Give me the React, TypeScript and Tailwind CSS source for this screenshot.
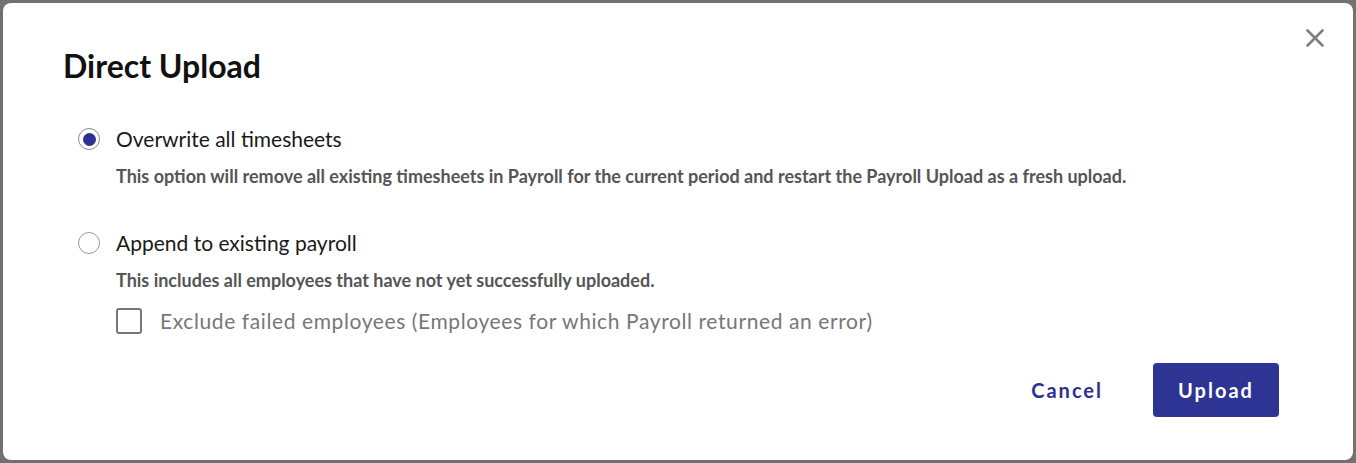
import React from "react";

export default function App() {
  return (
    <div className="w-[1356px] h-[463px] bg-[#717171] p-[3px] overflow-hidden" style={{ fontFamily: "Lato, 'Noto Sans', sans-serif" }}>
      <div className="relative w-full h-full bg-white rounded-[8px] pl-[60px] pr-[74px] pt-[45px]">
        <button className="absolute right-[26px] top-[23px] w-[24px] h-[24px] flex items-center justify-center" aria-label="Close">
          <svg width="18" height="18" viewBox="0 0 18 18">
            <path d="M1.5 1.5 L16.5 16.5 M16.5 1.5 L1.5 16.5" stroke="#7f7f7f" strokeWidth="2.6" strokeLinecap="round" />
          </svg>
        </button>
        <h1 className="text-[32px] leading-[36px] font-bold text-[#111]">Direct Upload</h1>

        <div className="mt-[41px] ml-[15px]">
          <div className="flex items-center h-[28px]">
            <span className="w-[22px] h-[22px] rounded-full border border-[#8c8c8c] flex items-center justify-center">
              <span className="w-[13px] h-[13px] rounded-full bg-[#2e3192]" />
            </span>
            <span className="ml-[16px] text-[21px] text-[#1a1a1a]">Overwrite all timesheets</span>
          </div>
          <p className="mt-[13px] ml-[38px] text-[18px] leading-[20px] font-bold text-[#555]">
            This option will remove all existing timesheets in Payroll for the current period and restart the Payroll Upload as a fresh upload.
          </p>

          <div className="mt-[43px] flex items-center h-[28px]">
            <span className="w-[22px] h-[22px] rounded-full border border-[#9a9a9a]" />
            <span className="ml-[16px] text-[21px] text-[#1a1a1a]">Append to existing payroll</span>
          </div>
          <p className="mt-[13px] ml-[38px] text-[18px] leading-[20px] font-bold text-[#555]">
            This includes all employees that have not yet successfully uploaded.
          </p>

          <div className="mt-[17px] ml-[38px] flex items-center h-[28px]">
            <span className="w-[26px] h-[26px] rounded-[3px] border-2 border-[#777]" />
            <span className="ml-[18px] text-[21px] tracking-[0.6px] text-[#777]">Exclude failed employees (Employees for which Payroll returned an error)</span>
          </div>
        </div>

        <div className="mt-[28px] flex justify-end items-center gap-[26px]">
          <button className="h-[54px] px-[24px] text-[20px] font-bold tracking-[0.1em] text-[#2e3192]">Cancel</button>
          <button className="h-[54px] w-[126px] rounded-[4px] bg-[#2e3494] text-white text-[20px] font-bold tracking-[0.1em]">Upload</button>
        </div>
      </div>
    </div>
  );
}
